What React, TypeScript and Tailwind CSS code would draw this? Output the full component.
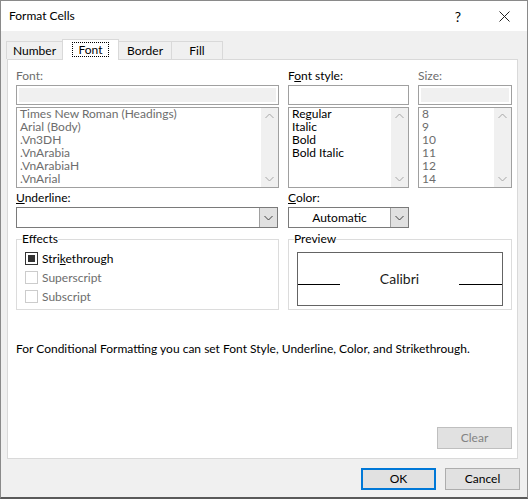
import React from "react";

const ui = { fontFamily: 'Lato, "Noto Sans", sans-serif' };

const Chevron = ({ up = false, color = "#a6a6a6" }: { up?: boolean; color?: string }) => (
  <svg width="9" height="6" viewBox="0 0 9 6" className="block">
    <path
      d={up ? "M0.5 5 L4.5 1 L8.5 5" : "M0.5 1 L4.5 5 L8.5 1"}
      fill="none"
      stroke={color}
      strokeWidth="1"
    />
  </svg>
);

const ListBox = ({
  items,
  disabled = false,
  className = ""
}: {
  items: string[];
  disabled?: boolean;
  className?: string;
}) => (
  <div className={`flex h-[81px] border border-[#a0a0a0] bg-white ${className}`}>
    <div className={`-mt-[1px] flex-1 pl-[3px] leading-[13px] ${disabled ? "text-[#6d6d6d]" : "text-black"}`}>
      {items.map((item) => (
        <div key={item} className="h-[13px] whitespace-nowrap">{item}</div>
      ))}
    </div>
    <div className="flex w-[17px] flex-col items-center justify-between bg-[#f0f0f0] py-[5px]">
      <Chevron up />
      <Chevron />
    </div>
  </div>
);

const TextBox = ({ disabled = false }: { disabled?: boolean }) => (
  <div className="h-[20px] border border-[#a0a0a0] bg-white p-[2px]">
    {disabled && <div className="h-full bg-[#f0f0f0]" />}
  </div>
);

const Combo = ({ value = "", className = "" }: { value?: string; className?: string }) => (
  <div className={`flex h-[21px] border border-[#7a7a7a] bg-white ${className}`}>
    <div className="flex flex-1 items-center justify-center">{value}</div>
    <div className="flex w-[18px] items-center justify-center border-l border-[#a0a0a0] bg-[#e1e1e1]">
      <Chevron color="#404040" />
    </div>
  </div>
);

const Check = ({ label, checked = false, disabled = false }: { label: React.ReactNode; checked?: boolean; disabled?: boolean }) => (
  <div className={`flex h-[19px] items-center ${disabled ? "text-[#6d6d6d]" : "text-black"}`}>
    <div
      className={`ml-[8px] mr-[4px] flex h-[13px] w-[13px] items-center justify-center border ${
        disabled ? "border-[#cccccc]" : "border-[#333333]"
      } bg-white`}
    >
      {checked && <div className="h-[7px] w-[7px] bg-[#333333]" />}
    </div>
    <span>{label}</span>
  </div>
);

export default function App() {
  const tabs = ["Number", "Font", "Border", "Fill"];

  return (
    <div
      className="flex h-[499px] w-[528px] flex-col border border-b-2 border-[#8a8a8a] border-b-[#5a5a5a] bg-[#f0f0f0] text-[12px] text-black"
      style={ui}
    >
      {/* title bar */}
      <div className="flex h-[30px] items-center bg-white pl-[8px]">
        <span className="flex-1">Format Cells</span>
        <span className="w-[46px] text-center text-[14px]">?</span>
        <span className="flex w-[46px] justify-center">
          <svg width="11" height="11" viewBox="0 0 11 11">
            <path d="M0.5 0.5 L10.5 10.5 M10.5 0.5 L0.5 10.5" stroke="#222" strokeWidth="1" />
          </svg>
        </span>
      </div>

      {/* tabs */}
      <div className="mt-[7px] flex h-[21px] items-end pl-[6px]">
        {tabs.map((t) => {
          const active = t === "Font";
          const widths: Record<string, string> = {
            Number: "w-[57px]",
            Font: "w-[57px]",
            Border: "w-[54px]",
            Fill: "w-[52px]"
          };
          return active ? (
            <div
              key={t}
              className={`relative z-10 -mb-px -ml-px flex h-[21px] ${widths[t]} items-center justify-center border border-b-0 border-[#d9d9d9] bg-white pb-[1px]`}
            >
              <span className="border border-dotted border-black px-[6px] leading-[13px]">{t}</span>
            </div>
          ) : (
            <div
              key={t}
              className={`-ml-px flex h-[18px] ${widths[t]} items-center justify-center border border-b-0 border-[#d9d9d9] bg-[#f0f0f0] pt-[1px]`}
            >
              {t}
            </div>
          );
        })}
      </div>

      {/* panel */}
      <div className="ml-[6px] flex h-[400px] w-[511px] flex-col border border-[#d9d9d9] bg-white pl-[8px] pr-[5px] pt-[8px] pb-[9px]">
        <div className="grid grid-cols-[263px_121px_94px] gap-x-[9px]">
          <div className="h-[16px] leading-[16px] text-[#6d6d6d]">Font:</div>
          <div className="h-[16px] leading-[16px]">
            F<span className="underline">o</span>nt style:
          </div>
          <div className="h-[16px] leading-[16px] text-[#6d6d6d]">Size:</div>

          <div className="mt-[1px]"><TextBox disabled /></div>
          <div className="mt-[1px]"><TextBox /></div>
          <div className="mt-[1px]"><TextBox disabled /></div>

          <ListBox
            className="mt-[2px]"
            disabled
            items={["Times New Roman (Headings)", "Arial (Body)", ".Vn3DH", ".VnArabia", ".VnArabiaH", ".VnArial"]}
          />
          <ListBox className="mt-[2px]" items={["Regular", "Italic", "Bold", "Bold Italic"]} />
          <ListBox className="mt-[2px]" disabled items={["8", "9", "10", "11", "12", "14"]} />

          <div className="mt-[2px] h-[16px] leading-[16px]">
            <span className="underline">U</span>nderline:
          </div>
          <div className="mt-[2px] h-[16px] leading-[16px]">
            <span className="underline">C</span>olor:
          </div>
          <div />

          <Combo className="mt-[1px] mr-[1px]" />
          <Combo className="mt-[1px]" value="Automatic" />
          <div />
        </div>

        <div className="mt-[3px] grid grid-cols-[263px_224px] gap-x-[9px]">
          <fieldset className="h-[79px] border border-[#dcdcdc] pr-[1px]">
            <legend className="ml-[5px] px-0 leading-[16px]">Effects</legend>
            <div className="mt-[2px]">
              <Check
                checked
                label={
                  <>
                    Stri<span className="underline">k</span>ethrough
                  </>
                }
              />
              <Check disabled label="Superscript" />
              <Check disabled label="Subscript" />
            </div>
          </fieldset>
          <fieldset className="h-[79px] border border-[#dcdcdc]">
            <legend className="ml-[5px] px-0 leading-[16px]">Preview</legend>
            <div className="mx-[8px] mt-[5px] flex h-[54px] items-center border border-[#646464]">
              <div className="mt-[10px] h-px w-[42px] bg-black" />
              <div className="mb-[2px] flex-1 text-center text-[14px] text-[#1a1a1a]">Calibri</div>
              <div className="mt-[10px] h-px w-[43px] bg-black" />
            </div>
          </fieldset>
        </div>

        <div className="mt-[31px] h-[16px] leading-[16px]">
          For Conditional Formatting you can set Font Style, Underline, Color, and Strikethrough.
        </div>

        <div className="mt-auto flex justify-end">
          <div className="flex h-[22px] w-[75px] items-center justify-center border border-[#bfbfbf] bg-[#e1e1e1] text-[#838383]">
            Clear
          </div>
        </div>
      </div>

      {/* buttons */}
      <div className="mt-[9px] flex justify-end gap-[9px] pr-[7px]">
        <div className="flex h-[22px] w-[75px] items-center justify-center border-2 border-[#0078d7] bg-[#e1e1e1]">
          OK
        </div>
        <div className="flex h-[22px] w-[75px] items-center justify-center border border-[#adadad] bg-[#e1e1e1]">
          Cancel
        </div>
      </div>
    </div>
  );
}
